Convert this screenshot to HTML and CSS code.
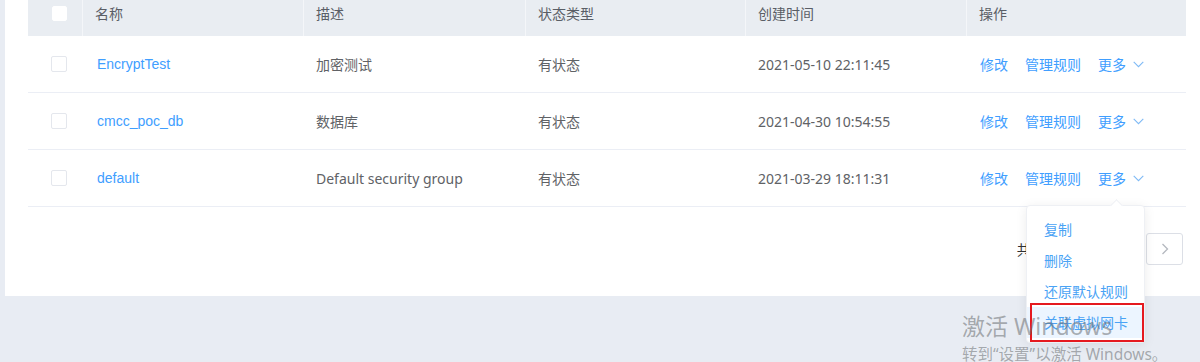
FILE: index.html
```html
<!DOCTYPE html>
<html lang="zh-CN">
<head>
<meta charset="utf-8">
<title>安全组</title>
<link rel="stylesheet" href="styles.css">
</head>
<body>
<div class="page">
  <div class="card">
    <div class="table">
      <div class="row head">
        <div class="cell check"><span class="cb cb-head"></span></div>
        <div class="cell">名称</div>
        <div class="cell sep">描述</div>
        <div class="cell sep">状态类型</div>
        <div class="cell sep">创建时间</div>
        <div class="cell sep">操作</div>
      </div>
      <div class="row">
        <div class="cell check"><span class="cb"></span></div>
        <div class="cell"><a class="link name">EncryptTest</a></div>
        <div class="cell">加密测试</div>
        <div class="cell">有状态</div>
        <div class="cell">2021-05-10 22:11:45</div>
        <div class="cell ops"><a class="link">修改</a><a class="link">管理规则</a><a class="link more">更多<svg class="chev" width="11" height="7" viewBox="0 0 11 7"><path d="M0.7 0.8 L5.5 5.6 L10.3 0.8" fill="none" stroke="#7fbaf5" stroke-width="1.1"/></svg></a></div>
      </div>
      <div class="row">
        <div class="cell check"><span class="cb"></span></div>
        <div class="cell"><a class="link name">cmcc_poc_db</a></div>
        <div class="cell">数据库</div>
        <div class="cell">有状态</div>
        <div class="cell">2021-04-30 10:54:55</div>
        <div class="cell ops"><a class="link">修改</a><a class="link">管理规则</a><a class="link more">更多<svg class="chev" width="11" height="7" viewBox="0 0 11 7"><path d="M0.7 0.8 L5.5 5.6 L10.3 0.8" fill="none" stroke="#7fbaf5" stroke-width="1.1"/></svg></a></div>
      </div>
      <div class="row">
        <div class="cell check"><span class="cb"></span></div>
        <div class="cell"><a class="link name">default</a></div>
        <div class="cell">Default security group</div>
        <div class="cell">有状态</div>
        <div class="cell">2021-03-29 18:11:31</div>
        <div class="cell ops"><a class="link">修改</a><a class="link">管理规则</a><a class="link more">更多<svg class="chev" width="11" height="7" viewBox="0 0 11 7"><path d="M0.7 0.8 L5.5 5.6 L10.3 0.8" fill="none" stroke="#7fbaf5" stroke-width="1.1"/></svg></a></div>
      </div>
    </div>
    <div class="pager">
      <span class="total">共 3 条</span>
      <span class="pg prev"></span>
      <span class="pg active">1</span>
      <span class="pg next"><svg width="8" height="12" viewBox="0 0 8 12"><path d="M1.5 1 L6.5 6 L1.5 11" fill="none" stroke="#b4b8bf" stroke-width="1.3"/></svg></span>
    </div>
  </div>

  <div class="dropdown">
    <span class="arrow"></span>
    <div class="item">复制</div>
    <div class="item">删除</div>
    <div class="item">还原默认规则</div>
    <div class="item hover">关联虚拟网卡</div>
  </div>
  <div class="annot"></div>

  <div class="watermark">
    <div class="wm1">激活 Windows</div>
    <div class="wm2">转到“设置”以激活 Windows。</div>
  </div>
</div>
</body>
</html>
```

FILE: styles.css
```css
* { box-sizing: border-box; }
html, body {
  margin: 0;
  padding: 0;
  height: 100%;
  overflow: hidden;
  background: #e8ecf3;
}
body {
  font-family: "Noto Sans", "Noto Sans CJK SC", sans-serif;
  font-size: 14px;
  color: #606266;
}
.page {
  position: relative;
  display: flow-root;
  height: 362px;
  padding-left: 5px;
}
.card {
  margin-top: -10px;
  background: #fff;
  padding: 0 14px 31px 23px;
}
.table {
  width: 1158px;
}
.row {
  display: grid;
  grid-template-columns: 54px 221px 222px 220px 221px 220px;
  height: 57px;
  border-bottom: 1px solid #ebeef5;
}
.row.head {
  height: 46px;
  background: #e9edf2;
  border-bottom: none;
  color: #5a5e66;
}
.cell {
  display: flex;
  align-items: center;
  padding-left: 13px;
  white-space: nowrap;
}
.head .cell.sep,
.head .cell:nth-child(2) {
  border-left: 1px solid #f4f6f9;
  padding-left: 12px;
}
.cell.check {
  padding-left: 23px;
}
.cb {
  display: block;
  width: 16px;
  height: 16px;
  border: 1px solid #e4e7ed;
  border-radius: 2px;
  background: #fff;
}
.cb-head {
  border-color: #fff;
  margin-left: 1px;
  width: 15px;
  height: 15px;
}
.link {
  color: #409eff;
  cursor: pointer;
}
.link.name {
  font-family: "Liberation Sans", "Noto Sans CJK SC", sans-serif;
  padding-left: 2px;
}
.ops {
  padding-left: 14px;
}
.ops .link {
  margin-right: 17px;
  display: flex;
  align-items: center;
}
.ops .more .chev {
  margin-left: 7px;
  margin-top: 1px;
}

.pager {
  display: flex;
  justify-content: flex-end;
  align-items: center;
  margin-top: 26px;
  margin-right: 3px;
  height: 32px;
}
.total {
  color: #303133;
  margin-right: 10px;
}
.pg {
  display: flex;
  align-items: center;
  justify-content: center;
  height: 32px;
  border: 1px solid #dcdfe6;
  border-radius: 3px;
  background: #fff;
}
.pg.prev { width: 37px; margin-right: 6px; }
.pg.active { width: 32px; border-color: #409eff; color: #409eff; }
.pg.next { width: 37px; margin-left: 1px; }

.dropdown {
  position: absolute;
  left: 1026px;
  top: 205px;
  width: 119px;
  padding: 8px 0 4px;
  background: #fff;
  border: 1px solid #eef0f4;
  border-radius: 4px;
  box-shadow: 0 2px 12px rgba(0, 0, 0, 0.08);
  z-index: 5;
}
.dropdown .arrow {
  position: absolute;
  top: -5px;
  left: 85px;
  width: 9px;
  height: 9px;
  background: #fff;
  border-left: 1px solid #eef0f4;
  border-top: 1px solid #eef0f4;
  transform: rotate(45deg);
}
.item {
  height: 31px;
  line-height: 31px;
  padding-left: 17px;
  color: #4aa3f5;
  white-space: nowrap;
}
.item.hover {
  background: #ecf5ff;
}
.annot {
  position: absolute;
  left: 1030px;
  top: 303px;
  width: 114px;
  height: 39px;
  border: 2px solid #e5191f;
  z-index: 6;
}
.watermark {
  position: absolute;
  left: 962px;
  top: 311px;
  z-index: 7;
  color: rgba(105, 108, 112, 0.55);
  font-family: "Noto Sans", "Noto Sans CJK SC", sans-serif;
  white-space: nowrap;
  pointer-events: none;
}
.wm1 {
  font-size: 23px;
  line-height: 31px;
}
.wm2 {
  font-size: 15.5px;
  line-height: 24px;
  margin-top: 0;
}
```
